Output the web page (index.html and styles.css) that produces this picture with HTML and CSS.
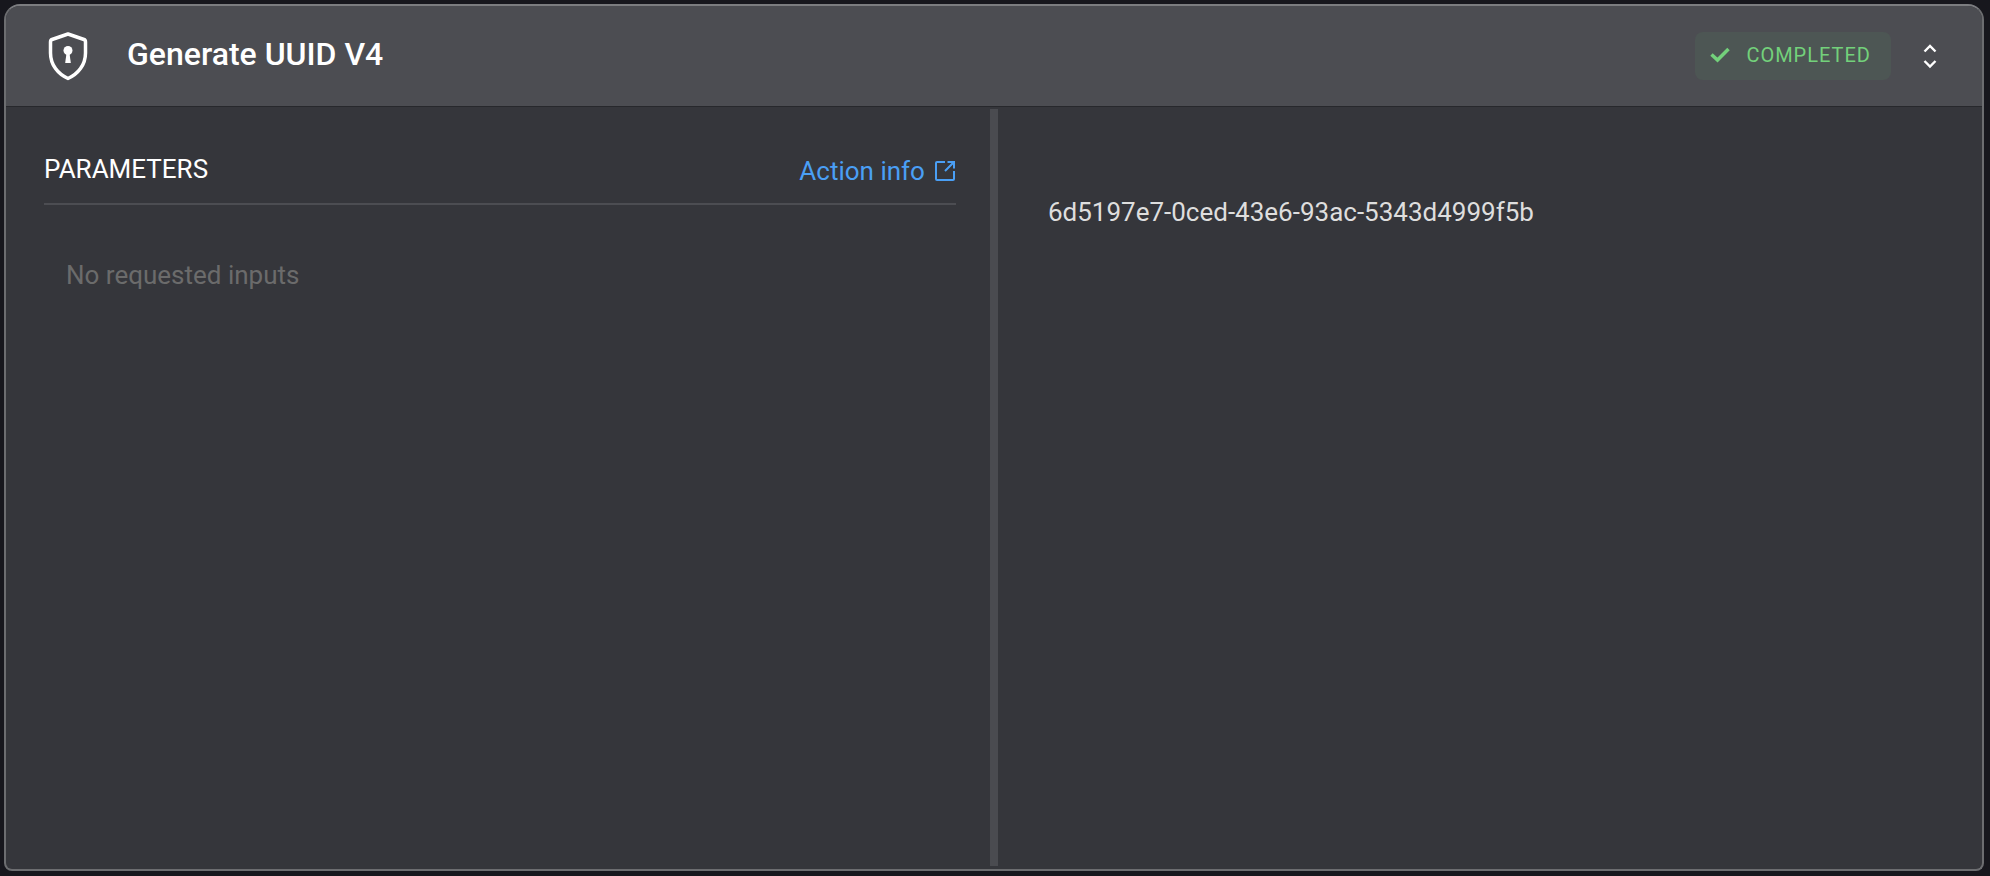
FILE: index.html
```html
<!DOCTYPE html>
<html lang="en">
<head>
  <meta charset="UTF-8">
  <meta name="viewport" content="width=device-width, initial-scale=1.0">
  <title>Generate UUID V4</title>
  <link rel="stylesheet" href="styles.css">
</head>
<body>
  <main class="card">
    <header class="card-header">
      <svg class="shield" viewBox="0 0 40 50" aria-hidden="true">
        <path d="M20 3 L36 8.500 Q37.500 9 37.500 11 V22 C37.500 34 30 43 20 47.500 C10 43 2.500 34 2.500 22 V11 Q2.500 9 4 8.500 Z" fill="none" stroke="#fff" stroke-width="3.500" stroke-linejoin="round"/>
        <circle cx="20" cy="19.500" r="4.500" fill="#fff"/>
        <path d="M18.500 22 H21.500 L22.800 32 H17.200 Z" fill="#fff"/>
      </svg>
      <h1>Generate UUID V4</h1>
      <div class="status">
        <svg class="check" viewBox="0 0 20 16" aria-hidden="true">
          <path d="M1.500 7.500 L7.500 13 L18.500 2" fill="none" stroke="#73d17b" stroke-width="3.500"/>
        </svg>
        <span>COMPLETED</span>
      </div>
      <button class="toggle" type="button" aria-label="Expand or collapse">
        <svg viewBox="0 0 14 26" aria-hidden="true">
          <path d="M1.500 8.500 L7 3 L12.500 8.500 M1.500 18 L7 23.500 L12.500 18" fill="none" stroke="#fff" stroke-width="2.400"/>
        </svg>
      </button>
    </header>

    <div class="card-body">
      <section class="params">
        <div class="params-header">
          <h2>PARAMETERS</h2>
          <a class="info-link" href="#">
            Action info
            <svg viewBox="0 0 22 22" aria-hidden="true">
              <path d="M11 2 H3 Q2 2 2 3 V19 Q2 20 3 20 H19 Q20 20 20 19 V11 M13.500 2 H20 V8.500 M20 2 L11 11" fill="none" stroke="#4a9ff5" stroke-width="2"/>
            </svg>
          </a>
        </div>
        <p class="empty">No requested inputs</p>
      </section>
      <div class="divider"></div>
      <section class="output">
        <p>6d5197e7-0ced-43e6-93ac-5343d4999f5b</p>
      </section>
    </div>
  </main>
</body>
</html>
```
FILE: styles.css
```css
* {
  box-sizing: border-box;
}

body {
  margin: 0;
  padding: 4px 6px 5px 4px;
  min-height: 100vh;
  display: flex;
  background-color: #17171d;
  color: #fff;
  font-family: Roboto, "Liberation Sans", sans-serif;
}

h1, h2, p {
  margin: 0;
}

.card {
  flex: 1;
  display: flex;
  flex-direction: column;
  border: 2px solid #6c6d70;
  border-top-color: #7c7d80;
  border-radius: 16px 16px 8px 8px;
  background-color: #35363b;
  overflow: hidden;
}

.card-header {
  display: flex;
  align-items: center;
  height: 101px;
  padding: 0 45px 0 42px;
  background-color: #4c4d52;
  border-bottom: 1px solid #27282c;
}

.shield {
  width: 40px;
  height: 50px;
  margin-right: 39px;
}

h1 {
  font-size: 32px;
  line-height: 40px;
  font-weight: 500;
  padding-bottom: 4px;
}

.status {
  display: flex;
  align-items: center;
  gap: 16px;
  height: 48px;
  margin-left: auto;
  padding: 0 20px 2px 15px;
  border-radius: 8px;
  background-color: #4d5654;
  color: #73d17b;
  font-size: 20px;
  line-height: 24px;
  letter-spacing: 1px;
}

.check {
  width: 20px;
  height: 16px;
}

.toggle {
  display: flex;
  margin-left: 32px;
  padding: 0;
  border: none;
  background: none;
  cursor: pointer;
}

.toggle svg {
  width: 14px;
  height: 26px;
}

.card-body {
  flex: 1;
  display: flex;
  padding: 2px 0 3px;
}

.params {
  flex: 1 1 50%;
  padding: 36px 34px 0 38px;
}

.params-header {
  display: flex;
  justify-content: space-between;
  height: 60px;
  border-bottom: 2px solid #4c4d52;
}

h2 {
  font-size: 26px;
  line-height: 48px;
  font-weight: 400;
}

.info-link {
  display: flex;
  gap: 9px;
  align-items: center;
  height: 52px;
  color: #4a9ff5;
  font-size: 26px;
  line-height: 32px;
  text-decoration: none;
}

.info-link svg {
  width: 22px;
  height: 22px;
}

.empty {
  padding: 54px 22px 0;
  color: #6b6b6b;
  font-size: 26px;
  line-height: 32px;
}

.divider {
  flex: 0 0 8px;
  background-color: #4a4b50;
}

.output {
  flex: 1 1 50%;
  padding: 87px 50px 0;
  color: #dedede;
  font-size: 26px;
  line-height: 32px;
}
```
